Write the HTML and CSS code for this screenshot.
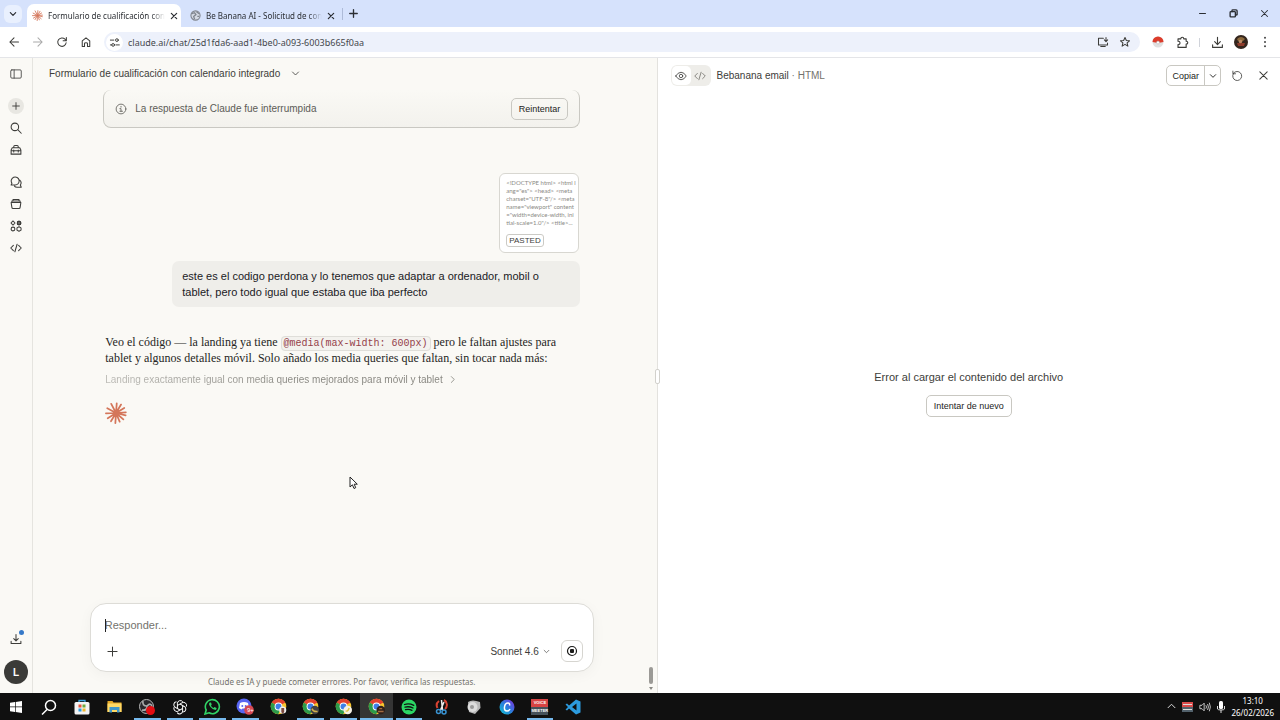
FILE: index.html
```html
<!DOCTYPE html>
<html lang="es">
<head>
    <meta charset="UTF-8">
    <meta name="viewport" content="width=device-width, initial-scale=1.0">
    <title>Formulario de cualificación con calendario integrado</title>
    <link rel="stylesheet" href="styles.css">
</head>
<body>
    <!-- Shared symbols -->
    <svg class="defs" width="0" height="0" aria-hidden="true">
        <symbol id="burst" viewBox="0 0 24 24">
            <path d="M12 12L12.800 1.500M12 12L17.500 2.800M12 12L21 6.500M12 12L22.800 11.200M12 12L22.500 14.500M12 12L20 19M12 12L16 21.500M12 12L11.300 23M12 12L6.500 21M12 12L3 17.800M12 12L1 12.300M12 12L2.500 6.800M12 12L6.800 2" fill="none" stroke="#d4765a" stroke-width="1.900" stroke-linecap="round"/>
        </symbol>
        <symbol id="chrome" viewBox="0 0 24 24">
            <circle cx="12" cy="12" r="11" fill="#f7c52d"/>
            <path d="M12 12L2.500 6.500A11 11 0 0 1 21.500 6.500Z" fill="#e2412f"/>
            <path d="M12 12L2.500 6.500A11 11 0 0 0 11.500 23L16 14Z" fill="#2c9b4b"/>
            <path d="M12 6.500H21.700L19 4 12 1 5 4 7 9Z" fill="#e2412f"/>
            <circle cx="12" cy="12" r="5.500" fill="#fff"/>
            <circle cx="12" cy="12" r="4.200" fill="#3f7fe8"/>
        </symbol>
        <symbol id="close" viewBox="0 0 12 12">
            <path d="M2 2L10 10M10 2L2 10"/>
        </symbol>
        <symbol id="down" viewBox="0 0 12 12">
            <path d="M2 4L6 8L10 4"/>
        </symbol>
        <symbol id="plus" viewBox="0 0 12 12">
            <path d="M6 1V11M1 6H11"/>
        </symbol>
        <symbol id="code" viewBox="0 0 16 16">
            <path d="M4.500 4.500L1 8L4.500 11.500M11.500 4.500L15 8L11.500 11.500M9.500 3L6.500 13"/>
        </symbol>
    </svg>

    <header class="browser">
        <div class="tab-strip">
            <button class="tab-search" aria-label="Buscar pestañas"><svg class="icon bold" width="8" height="8"><use href="#down"/></svg></button>
            <div class="tab active">
                <svg width="11" height="11"><use href="#burst"/></svg>
                <span class="tab-title">Formulario de cualificación con</span>
                <button aria-label="Cerrar"><svg class="icon bold" width="8" height="8"><use href="#close"/></svg></button>
            </div>
            <div class="tab">
                <svg width="11" height="11" viewBox="0 0 12 12"><circle cx="6" cy="6" r="5" fill="#d5dae4" stroke="#80868f" stroke-width="1.200"/><path d="M2 4L5 3L6.500 5L4 7L5 10M7 2L10 4M8 7L10 7" fill="none" stroke="#80868f" stroke-width="1.400"/></svg>
                <span class="tab-title">Be Banana AI - Solicitud de con</span>
                <button aria-label="Cerrar"><svg class="icon bold" width="8" height="8"><use href="#close"/></svg></button>
            </div>
            <button class="new-tab" aria-label="Nueva pestaña"><svg class="icon bold" width="9" height="9"><use href="#plus"/></svg></button>
            <div class="window-buttons">
                <button aria-label="Minimizar"><svg class="icon" width="9" height="9" viewBox="0 0 12 12"><path d="M2 6H10"/></svg></button>
                <button aria-label="Restaurar"><svg class="icon bold" width="9" height="9" viewBox="0 0 12 12"><rect x="1.500" y="3.500" width="7" height="7" rx="1"/><path d="M4 3.500V2Q4 1.200 5 1.200H9.500Q10.800 1.200 10.800 2.500V7.500Q10.800 8 9 8"/></svg></button>
                <button aria-label="Cerrar"><svg class="icon" width="9" height="9"><use href="#close"/></svg></button>
            </div>
        </div>
        <div class="toolbar">
            <div class="nav-buttons">
                <button aria-label="Atrás"><svg class="icon" width="12" height="12" viewBox="0 0 16 16"><path d="M14 8H2.500M8 2.500L2.500 8L8 13.500"/></svg></button>
                <button class="disabled" aria-label="Adelante"><svg class="icon" width="12" height="12" viewBox="0 0 16 16"><path d="M2 8H13.500M8 2.500L13.500 8L8 13.500"/></svg></button>
                <button aria-label="Recargar"><svg class="icon" width="12" height="12" viewBox="0 0 16 16"><path d="M13.500 9A5.600 5.600 0 1 1 12 4.300L13.500 6M13.800 2V6.200H9.500"/></svg></button>
                <button aria-label="Inicio"><svg class="icon" width="12" height="12" viewBox="0 0 16 16"><path d="M3 6.500L8 2.500L13 6.500V14H10V10Q10 9 8 9Q6 9 6 10V14H3Z"/></svg></button>
            </div>
            <div class="url-bar">
                <span class="site-info"><svg class="icon" width="11" height="11" viewBox="0 0 16 16"><path d="M2 4.500H7M2 11.500H4M10 11.500H15"/><circle cx="11.500" cy="4.500" r="2"/><circle cx="6" cy="11.500" r="2"/></svg></span>
                <input type="text" aria-label="Dirección" value="claude.ai/chat/25d1fda6-aad1-4be0-a093-6003b665f0aa">
                <button aria-label="Instalar"><svg class="icon" width="12" height="12" viewBox="0 0 16 16"><path d="M8.500 3H2V12H14V9.500M5 14H11M12 2V7M9.800 5.200L12 7.500L14.200 5.200"/></svg></button>
                <button aria-label="Favorito"><svg class="icon" width="12" height="12" viewBox="0 0 16 16"><path d="M8 2L9.800 6L14 6.400L10.800 9.200L11.800 13.500L8 11.200L4.200 13.500L5.200 9.200L2 6.400L6.200 6Z"/></svg></button>
            </div>
            <div class="extensions">
                <button aria-label="Extensión"><svg width="12" height="12" viewBox="0 0 12 12"><circle cx="6" cy="6" r="5.500" fill="#e0e0e0"/><path d="M.500 6A5.500 5.500 0 0 1 11.500 6L6 7Z" fill="#dc3c2b"/><circle cx="6" cy="6.500" r="1.500" fill="#fff" stroke="#aaa" stroke-width=".500"/></svg></button>
                <button aria-label="Extensiones"><svg class="icon" width="13" height="13" viewBox="0 0 16 16"><path d="M2.500 3.500H6Q6 1.500 7.800 1.500Q9.500 1.500 9.500 3.500H12.500V6.500Q14.500 6.500 14.500 8.300Q14.500 10 12.500 10V14H2.500V10.500Q5 10.500 5 8.500Q5 6.500 2.500 6.500Z"/></svg></button>
                <span class="divider"></span>
                <button aria-label="Descargas"><svg class="icon" width="13" height="13" viewBox="0 0 16 16"><path d="M8 1.500V10M4.500 7L8 10.500L11.500 7M2 11V14H14V11"/></svg></button>
                <button aria-label="Perfil"><svg width="14" height="14" viewBox="0 0 14 14"><circle cx="7" cy="7" r="7" fill="#33251d"/><path d="M3 4Q7 0 11 4L9 6H4Z" fill="#8c6a3d"/><path d="M3 8H11L10 11H4Z" fill="#8d3b2b"/><circle cx="6.500" cy="6.500" r="1.800" fill="#bc8a66"/></svg></button>
                <button aria-label="Menú"><svg width="12" height="12" viewBox="0 0 12 12" fill="#444"><circle cx="6" cy="1.800" r="1"/><circle cx="6" cy="6" r="1"/><circle cx="6" cy="10.200" r="1"/></svg></button>
            </div>
        </div>
    </header>

    <div class="app">
        <nav class="sidebar">
            <button aria-label="Barra lateral"><svg class="icon thin" width="12" height="12" viewBox="0 0 16 16"><rect x="1" y="2.500" width="14" height="11" rx="1.500"/><path d="M5.500 2.500V13.500"/></svg></button>
            <button class="new-chat" aria-label="Nuevo chat"><svg class="icon" width="8" height="8"><use href="#plus"/></svg></button>
            <button aria-label="Buscar"><svg class="icon" width="12" height="12" viewBox="0 0 16 16"><circle cx="6.500" cy="6.500" r="5"/><path d="M10.300 10.300L15 15"/></svg></button>
            <button aria-label="Personalizar"><svg class="icon" width="12" height="12" viewBox="0 0 16 16"><path d="M1.500 8L3 5H13L14.500 8V13.500H1.500ZM5 5V3.500Q5 2 6.500 2H9.500Q11 2 11 3.500V5M1.500 9H14.500M5 8V10.500M11 8V10.500"/></svg></button>
            <button class="group" aria-label="Chats"><svg class="icon" width="12" height="12" viewBox="0 0 16 16"><path d="M1.500 12L2.600 9.800A5.300 5.300 0 1 1 6.500 12ZM13 5.500A5 5 0 0 1 13.800 12L15 15H9.500Q7 15 6 13.500"/></svg></button>
            <button aria-label="Proyectos"><svg class="icon" width="12" height="12" viewBox="0 0 16 16"><path d="M1.500 6H14.500L13.500 12.500Q13.300 14 12 14H4Q2.700 14 2.500 12.500ZM2.500 6V4H13.500V6M4 4V2H12V4"/></svg></button>
            <button aria-label="Artefactos"><svg class="icon" width="12" height="12" viewBox="0 0 16 16"><path d="M4 1.300L6.700 4L4 6.700L1.300 4ZM10 2H14V6H10ZM12 1V7M9.500 4H15"/><circle cx="4" cy="12" r="2.500"/><path d="M12 9L14.700 10.500V13.500L12 15L9.300 13.500V10.500Z"/></svg></button>
            <button aria-label="Código"><svg class="icon" width="12" height="12"><use href="#code"/></svg></button>
            <button class="download" aria-label="Descargar"><svg class="icon" width="12" height="12" viewBox="0 0 16 16"><path d="M8 2V10M5 7.500L8 10.500L11 7.500M1.500 11V14H14.500V11"/></svg><span class="badge"></span></button>
            <button class="user" aria-label="Cuenta">L</button>
        </nav>

        <main class="chat">
            <button class="chat-title">Formulario de cualificación con calendario integrado <svg class="icon thin" width="9" height="9"><use href="#down"/></svg></button>

            <div class="messages">
                <div class="notice">
                    <svg class="icon thin" width="12" height="12" viewBox="0 0 16 16"><circle cx="8" cy="8" r="6.500"/><path d="M6.500 7.500H8V11M6.500 11H10M8 4.500V5.500"/></svg>
                    <span>La respuesta de Claude fue interrumpida</span>
                    <button class="btn">Reintentar</button>
                </div>

                <div class="attachment">
                    <p>&lt;!DOCTYPE html&gt; &lt;html l<br>ang="es"&gt; &lt;head&gt; &lt;meta<br>charset="UTF-8"/&gt; &lt;meta<br>name="viewport" content<br>="width=device-width, ini<br>tial-scale=1.0"/&gt; &lt;title&gt;...</p>
                    <span class="tag">PASTED</span>
                </div>

                <p class="user-message">este es el codigo perdona y lo tenemos que adaptar a ordenador, mobil o tablet, pero todo igual que estaba que iba perfecto</p>

                <p class="reply">Veo el código — la landing ya tiene <code>@media(max-width: 600px)</code> pero le faltan ajustes para tablet y algunos detalles móvil. Solo añado los media queries que faltan, sin tocar nada más:</p>

                <button class="step"><span>Landing exactamente igual con media queries mejorados para móvil y tablet</span> <svg class="icon" width="7" height="7" viewBox="0 0 12 12"><path d="M4 1L9 6L4 11"/></svg></button>

                <svg class="spinner" width="22" height="22"><use href="#burst"/></svg>
            </div>

            <div class="composer">
                <div class="field">
                    <span class="caret"></span>
                    <textarea rows="1" aria-label="Mensaje" placeholder="Responder..."></textarea>
                </div>
                <div class="composer-row">
                    <button aria-label="Adjuntar"><svg class="icon thin" width="11" height="11"><use href="#plus"/></svg></button>
                    <button class="model">Sonnet 4.6 <svg class="icon thin" width="7" height="7"><use href="#down"/></svg></button>
                    <button class="stop" aria-label="Detener"><svg width="12" height="12" viewBox="0 0 12 12"><circle cx="6" cy="6" r="4.500" fill="none" stroke="#1b1b1a" stroke-width="1.200"/><rect x="4" y="4" width="4" height="4" rx="1" fill="#1b1b1a"/></svg></button>
                </div>
            </div>
            <p class="disclaimer">Claude es IA y puede cometer errores. Por favor, verifica las respuestas.</p>
            <div class="scrollbar"></div>
            <svg class="scroll-down" width="4" height="3" viewBox="0 0 4 3"><path d="M0 0H4L2 3Z" fill="#8a8985"/></svg>
            <svg class="cursor" width="10" height="14" viewBox="0 0 10 14"><path d="M1 1V11L3.400 8.800L5 12.500L6.700 11.700L5.200 8.200H8.300Z" fill="#fff" stroke="#222" stroke-width="1"/></svg>
        </main>

        <section class="artifact">
            <span class="resize-handle"></span>
            <div class="artifact-bar">
                <div class="view-toggle">
                    <button class="selected" aria-label="Vista previa"><svg class="icon thin" width="12" height="12" viewBox="0 0 16 16"><path d="M1 8Q4 3 8 3T15 8Q12 13 8 13T1 8Z"/><circle cx="8" cy="8" r="2.300"/></svg></button>
                    <button aria-label="Código"><svg class="icon thin" width="12" height="12"><use href="#code"/></svg></button>
                </div>
                <h2>Bebanana email <span>· HTML</span></h2>
                <div class="copy">
                    <button>Copiar</button>
                    <button aria-label="Más opciones"><svg class="icon" width="8" height="8"><use href="#down"/></svg></button>
                </div>
                <button aria-label="Recargar"><svg class="icon thin" width="12" height="12" viewBox="0 0 16 16"><path d="M3 5A6 6 0 1 0 8 2Q5 2 3 4.500M2.500 1.500V5H6"/></svg></button>
                <button aria-label="Cerrar"><svg class="icon thin" width="11" height="11"><use href="#close"/></svg></button>
            </div>
            <div class="error">
                <p>Error al cargar el contenido del archivo</p>
                <button class="btn">Intentar de nuevo</button>
            </div>
        </section>
    </div>

    <footer class="taskbar">
        <div class="apps">
            <button aria-label="Inicio"><svg width="12" height="12" viewBox="0 0 12 12" fill="#fff"><path d="M0 1.700L5 1V5.600H0ZM5.700 .900L12 0V5.600H5.700ZM0 6.300H5V11L0 10.300ZM5.700 6.300H12V12L5.700 11.100Z"/></svg></button>
            <button aria-label="Buscar"><svg width="16" height="16" viewBox="0 0 16 16" fill="none" stroke="#fff" stroke-width="1.500"><circle cx="9.500" cy="6.500" r="5"/><path d="M6 10.500L1 15.500"/></svg></button>
            <button aria-label="Tienda"><svg width="16" height="16" viewBox="0 0 16 16"><path d="M5 4V1.500H11V4" fill="none" stroke="#3ba4df" stroke-width="1.300"/><rect x=".500" y="3" width="15" height="12.500" rx="1.500" fill="#f4f4f4"/><path d="M4.500 5.500H7.500V8.500H4.500Z" fill="#e8523b"/><path d="M8.500 5.500H11.500V8.500H8.500Z" fill="#6cab3d"/><path d="M4.500 9.500H7.500V12.500H4.500Z" fill="#2d9ce0"/><path d="M8.500 9.500H11.500V12.500H8.500Z" fill="#f0b72c"/></svg></button>
            <button aria-label="Explorador"><svg width="15" height="15" viewBox="0 0 15 15"><path d="M.500 2H5.500L6.500 3.500H14.500V13H.500Z" fill="#e5a929"/><path d="M.500 4.500H14.500V13H.500Z" fill="#ffd966"/><path d="M2.500 8H12.500V13.500H10V11H5V13.500H2.500Z" fill="#4097ca"/></svg></button>
            <button class="open" aria-label="OBS"><svg width="18" height="18" viewBox="0 0 18 18"><circle cx="8.500" cy="8.500" r="7" fill="#29272b" stroke="#b8b8b8"/><path d="M9 8Q4 8 5 3M9 8Q13 4 14 9M9 8Q9 13 4 12" fill="none" stroke="#aaa" stroke-width="1.700"/><circle cx="12.500" cy="12.500" r="4.500" fill="#e40d12"/></svg></button>
            <button class="open" aria-label="ChatGPT"><svg width="16" height="16" viewBox="0 0 16 16" fill="none" stroke="#fff"><path id="petal" d="M5.400 9.500V4.200A3 3 0 0 1 10.800 2.800M5.400 6.500L10 3.800A3 3 0 0 1 14.300 7.600"/><use href="#petal" transform="rotate(120 8 8)"/><use href="#petal" transform="rotate(240 8 8)"/></svg></button>
            <button class="open" aria-label="WhatsApp"><svg width="17" height="17" viewBox="0 0 17 17"><path d="M1 16L2.200 12A7 7 0 1 1 5 14.800Z" fill="#111" stroke="#31d366" stroke-width="1.600"/><path d="M5.800 4.500Q4 6 6.500 9T11.500 12Q13 11 12.500 10L10.500 9L9.500 10Q7.500 9 7 7.500L7.700 6.500L7 4.500Z" fill="#31d366"/></svg></button>
            <button class="open" aria-label="Discord"><svg width="18" height="18" viewBox="0 0 18 18"><circle cx="8" cy="8" r="7.500" fill="#5865f2"/><path d="M4 5Q8 3 12 5L13 10L10.500 11.500L9.500 10.500H6.500L5.500 11.500L3 10Z" fill="#fff"/><circle cx="6.300" cy="8" r="1" fill="#5865f2"/><circle cx="9.700" cy="8" r="1" fill="#5865f2"/><circle cx="13" cy="12" r="4.800" fill="#d64852"/></svg><span class="count">9+</span></button>
            <button aria-label="Chrome"><svg width="17" height="17" viewBox="0 0 24 24"><use href="#chrome"/><circle cx="18" cy="17" r="5" fill="#eee"/><path d="M16 14H20V20L18 22L16 20Z" fill="#7b493e"/></svg></button>
            <button class="open" aria-label="Chrome"><svg width="17" height="17" viewBox="0 0 24 24"><use href="#chrome"/><circle cx="18" cy="17" r="6" fill="#414044"/><path d="M14 15Q16 20 22 19" fill="none" stroke="#d2b14b" stroke-width="2"/></svg></button>
            <button class="open" aria-label="Chrome"><svg width="17" height="17" viewBox="0 0 24 24"><use href="#chrome"/><circle cx="18" cy="17" r="6" fill="#f4f0e4"/><path d="M15 18Q18 20 20 14" fill="none" stroke="#dec33f" stroke-width="2"/></svg></button>
            <button class="open current" aria-label="Chrome"><svg width="17" height="17" viewBox="0 0 24 24"><use href="#chrome"/><circle cx="18" cy="17" r="6" fill="#30211b"/><path d="M14 19H22M16 15H20" stroke="#a36c43" stroke-width="2"/></svg></button>
            <button class="open" aria-label="Spotify"><svg width="16" height="16" viewBox="0 0 16 16"><circle cx="8" cy="8" r="7.500" fill="#2bd765"/><path d="M3.500 5.500Q8 4 12.800 6.300M4 8.200Q8 7 12 9M4.500 10.700Q8 9.800 11 11.300" fill="none" stroke="#111" stroke-width="1.300" stroke-linecap="round"/></svg></button>
            <button aria-label="Recortes"><svg width="16" height="16" viewBox="0 0 16 16" fill="none"><path d="M5 2A5.500 5.500 0 0 0 3.500 9M10 1A5.500 5.500 0 0 1 11 10" stroke="#d84332" stroke-width="2"/><path d="M7.500 1L8.500 11M10 3L6.500 11" stroke="#eee" stroke-width="1.500"/><circle cx="4.500" cy="12.500" r="2" stroke="#3993d2" stroke-width="1.500"/><circle cx="10" cy="13" r="2" stroke="#3993d2" stroke-width="1.500"/></svg></button>
            <button aria-label="Audio"><svg width="16" height="16" viewBox="0 0 16 16"><path d="M2 3Q6 0 14 3L14.500 9L9 15L3 13Z" fill="#b8b8b8"/><circle cx="6.500" cy="8" r="5" fill="#ddd"/><circle cx="6" cy="8" r="2" fill="#999"/></svg></button>
            <button aria-label="Canva"><svg width="16" height="16" viewBox="0 0 16 16"><defs><linearGradient id="canva" x1="0" y1="1" x2="1" y2="0"><stop stop-color="#14c6d1"/><stop offset=".450" stop-color="#2684dc"/><stop offset="1" stop-color="#822be0"/></linearGradient></defs><circle cx="8" cy="8" r="7.500" fill="url(#canva)"/><path d="M10.500 6.500Q11 4 9 4Q6 4 5.500 8T8 12Q10 12 11 10" fill="none" stroke="#fff" stroke-width="1.500"/></svg></button>
            <button class="open" aria-label="Voicemeeter"><span class="voice"><b>VOICE</b><b>MEETER</b></span></button>
            <button aria-label="Visual Studio Code"><svg width="16" height="16" viewBox="0 0 16 16"><path d="M11 .500L15.500 2.500V13.500L11 15.500L4 9.500L2 11.500L.500 10.500L3 8L.500 5.500L2 4.500L4 6.500ZM11.500 4.500L7 8L11.500 11.500Z" fill="#2c9bdf" fill-rule="evenodd"/></svg></button>
        </div>
        <div class="tray">
            <svg width="9" height="9" viewBox="0 0 12 12" fill="none" stroke="#ddd" stroke-width="1.300"><path d="M1 8L6 3L11 8"/></svg>
            <svg width="11" height="10" viewBox="0 0 11 10"><path d="M0 0H11V5H0Z" fill="#d84b4b"/><path d="M0 5H11V10H0Z" fill="#52616b"/><path d="M1 2.500H10M1 7.500H10" stroke="#ddd"/></svg>
            <svg width="12" height="12" viewBox="0 0 14 14" fill="none" stroke="#ddd"><path d="M1 5H3.500L6 2.500V11.500L3.500 9H1ZM8 5Q9.500 7 8 9M10 3.500Q12 7 10 10.500M12 2Q14.500 7 12 12"/></svg>
            <svg width="8" height="12" viewBox="0 0 8 12"><rect x="2" y="0" width="4" height="8" rx="1.500" fill="#fff"/><path d="M.500 5V8Q1 9 4 9T7.500 8V5M4 9V12" fill="none" stroke="#ddd"/></svg>
            <time datetime="2026-02-26T13:10">13:10<br>26/02/2026</time>
        </div>
    </footer>
</body>
</html>
```

FILE: styles.css
```css
* {
    box-sizing: border-box;
}

body {
    margin: 0;
    height: 100vh;
    display: flex;
    flex-direction: column;
    overflow: hidden;
    font-family: "Liberation Sans", sans-serif;
    font-size: 10px;
    color: #3d3d3a;
}

p, h2 {
    margin: 0;
}

button {
    display: flex;
    align-items: center;
    justify-content: center;
    padding: 0;
    border: none;
    background: none;
    color: inherit;
    font: inherit;
    cursor: pointer;
}

svg {
    flex: none;
}

.defs {
    position: absolute;
}

.icon {
    fill: none;
    stroke: currentColor;
    stroke-width: 1.4;
    stroke-linecap: round;
    stroke-linejoin: round;
}

.icon.bold {
    stroke-width: 1.8;
}

.icon.thin {
    stroke-width: 1.1;
}

/* Browser */
.browser {
    font-family: "Noto Sans", sans-serif;
}

.tab-strip {
    display: flex;
    align-items: center;
    height: 27px;
    padding-left: 4px;
    background: #d6e2fc;
    font-size: 8px;
    color: #2b2e33;
}

.tab-search {
    width: 18px;
    height: 18px;
    margin-right: 5px;
    border-radius: 6px;
    background: #e9f0fe;
}

.tab {
    display: flex;
    align-items: center;
    gap: 5px;
    width: 160px;
    height: 23px;
    padding: 0 8px 0 9px;
    align-self: flex-end;
}

.tab.active {
    width: 154px;
    padding: 0 6px 0 5px;
    border-radius: 7px 7px 0 0;
    background: #fff;
}

.tab-title {
    flex: 1;
    white-space: nowrap;
    mask-image: linear-gradient(to right, #000 88%, transparent);
}

.tab button {
    width: 8px;
    height: 12px;
}

.new-tab {
    width: 22px;
    height: 12px;
    margin-left: 1px;
    border-left: 1px solid #aebbd8;
}

.window-buttons {
    display: flex;
    margin-left: auto;
}

.window-buttons button {
    width: 31px;
    height: 27px;
}

.toolbar {
    display: flex;
    align-items: center;
    gap: 6px;
    height: 31px;
    padding: 0 3px 0 2px;
    border-bottom: 1px solid #e4e5e8;
    background: #fff;
}

.nav-buttons,
.extensions {
    display: flex;
    align-items: center;
}

.nav-buttons button,
.extensions button {
    width: 24px;
    height: 20px;
}

.disabled {
    color: #aaa;
}

.url-bar {
    display: flex;
    flex: 1;
    align-items: center;
    height: 20px;
    padding: 0 4px 0 2px;
    border-radius: 10px;
    background: #edf1fb;
}

.site-info {
    display: grid;
    place-items: center;
    width: 17px;
    height: 17px;
    border-radius: 9px;
    background: #fff;
}

.url-bar input {
    flex: 1;
    padding: 0 5px;
    border: none;
    background: none;
    color: #44474c;
    font: inherit;
    font-size: 9px;
}

.url-bar button {
    width: 22px;
}

.divider {
    width: 1px;
    height: 9px;
    margin: 0 5px;
    background: #d0d3da;
}

/* App */
.app {
    display: grid;
    grid-template-columns: 33px 1fr 1fr;
    flex: 1;
    min-height: 0;
    background: #faf9f5;
}

.sidebar {
    display: flex;
    flex-direction: column;
    align-items: center;
    gap: 6px;
    padding: 8px 0 9px;
    border-right: 1px solid #e5e4df;
}

.sidebar button {
    width: 16px;
    height: 16px;
}

.sidebar .new-chat {
    margin-top: 10px;
    border-radius: 50%;
    background: #e8e7e2;
}

.sidebar .group {
    margin-top: 10px;
}

.sidebar .download {
    position: relative;
    margin-top: auto;
    margin-bottom: 7px;
}

.badge {
    position: absolute;
    top: -1px;
    right: 0;
    width: 5px;
    height: 5px;
    border-radius: 50%;
    background: #3679c8;
}

.sidebar .user {
    width: 24px;
    height: 24px;
    border-radius: 50%;
    background: #3b3b38;
    color: #fff;
    font-weight: 700;
}

.chat {
    position: relative;
    display: flex;
    flex-direction: column;
    align-items: center;
    min-width: 0;
    padding: 7px 6px 4px 0;
}

.chat-title {
    align-self: flex-start;
    gap: 11px;
    height: 16px;
    margin-left: 16px;
}

.messages {
    flex: 1;
    display: flex;
    flex-direction: column;
    align-items: flex-start;
    width: 100%;
    max-width: 477px;
    margin-top: 9px;
}

.notice {
    display: flex;
    align-items: center;
    gap: 8px;
    width: 100%;
    height: 38px;
    padding: 0 11px;
    border: 1px solid #c9c8c2;
    border-top: none;
    border-radius: 8px;
    background: linear-gradient(#faf9f5, #f3f2ed);
    color: #5d5c57;
}

.notice .btn {
    margin-left: auto;
}

.btn {
    height: 22px;
    padding: 0 7px;
    border: 1px solid #c9c8c2;
    border-radius: 5px;
    color: #242422;
    font-size: 9px;
}

.attachment {
    align-self: flex-end;
    width: 80px;
    height: 80px;
    margin: 45px 1px 8px 0;
    padding: 5px 6px;
    border: 1px solid #d8d7d1;
    border-radius: 6px;
    background: #fff;
}

.attachment p {
    margin-bottom: 7px;
    color: #8b8a85;
    font-family: Lato, sans-serif;
    font-size: 6px;
    line-height: 8px;
    white-space: nowrap;
}

.tag {
    display: block;
    width: fit-content;
    padding: 0 2px;
    border: 1px solid #cbcac5;
    border-radius: 3px;
    font-size: 8px;
    line-height: 11px;
}

.user-message {
    align-self: flex-end;
    max-width: 408px;
    padding: 7px 10px;
    border-radius: 7px;
    background: #efeeea;
    color: #20201e;
    font-size: 11px;
    line-height: 16px;
}

.reply {
    margin: 27px 0 0 2px;
    color: #262624;
    font-family: "Liberation Serif", serif;
    font-size: 12px;
    line-height: 16px;
}

code {
    padding: 1px 2px;
    border: 1px solid #dfded9;
    border-radius: 4px;
    background: #f3f2ee;
    color: #953f4a;
    font-family: "Liberation Mono", monospace;
    font-size: 10px;
    line-height: 1;
}

.step {
    gap: 6px;
    height: 16px;
    margin: 5px 0 0 2px;
    color: #85847e;
}

.step span {
    background: linear-gradient(to right, #bbbab5, #85847e 60%);
    background-clip: text;
    color: transparent;
}

.spinner {
    margin: 15px 0 0 2px;
}

.composer {
    width: 100%;
    max-width: 504px;
    padding: 13px 10px 9px 14px;
    border: 1px solid #dddcd7;
    border-radius: 16px;
    background: #fff;
    box-shadow: 0 3px 14px rgba(0, 0, 0, 0.04);
}

.field {
    position: relative;
}

.caret {
    position: absolute;
    top: 2px;
    left: 0;
    width: 1px;
    height: 13px;
    background: #222;
}

textarea {
    display: block;
    width: 100%;
    height: 18px;
    padding: 0;
    border: none;
    outline: none;
    resize: none;
    overflow: hidden;
    background: none;
    font: inherit;
    font-size: 11px;
    line-height: 16px;
}

textarea::placeholder {
    color: #73726c;
}

.composer-row {
    display: flex;
    align-items: center;
    margin-top: 5px;
}

.composer-row button:first-child {
    width: 16px;
    height: 16px;
}

.model {
    gap: 4px;
    margin-left: auto;
}

.stop {
    width: 22px;
    height: 22px;
    margin-left: 11px;
    border: 1px solid #d6d5d0;
    border-radius: 6px;
}

.disclaimer {
    margin-top: 3px;
    color: #73726c;
    font-family: "Noto Sans", sans-serif;
    font-size: 8px;
    line-height: 14px;
}

.scrollbar {
    position: absolute;
    right: 4px;
    bottom: 9px;
    width: 4px;
    height: 17px;
    border-radius: 2px;
    background: #9b9a96;
}

.scroll-down {
    position: absolute;
    right: 4px;
    bottom: 3px;
}

.cursor {
    position: absolute;
    top: 418px;
    left: 316px;
}

/* Artifact panel */
.artifact {
    position: relative;
    display: flex;
    flex-direction: column;
    border-left: 1px solid #e3e2de;
    background: #fff;
}

.resize-handle {
    position: absolute;
    top: 311px;
    left: -3px;
    width: 5px;
    height: 15px;
    border: 1px solid #d2d1cc;
    border-radius: 2px;
    background: #fff;
}

.artifact-bar {
    display: flex;
    align-items: center;
    gap: 6px;
    height: 35px;
    padding: 0 7px 0 13px;
}

.artifact-bar > button {
    width: 20px;
    height: 20px;
}

.view-toggle {
    display: flex;
    padding: 1px;
    border-radius: 6px;
    background: #eeede9;
}

.view-toggle button {
    width: 19px;
    height: 19px;
    border-radius: 5px;
    color: #73726c;
}

.view-toggle .selected {
    background: #fff;
    color: #3d3d3a;
}

h2 {
    font-size: 10px;
    font-weight: 400;
}

h2 span {
    color: #73726c;
}

.copy {
    display: flex;
    height: 21px;
    margin-left: auto;
    border: 1px solid #c9c8c2;
    border-radius: 5px;
    color: #242422;
    font-size: 9px;
}

.copy button {
    padding: 0 5px;
}

.copy button + button {
    width: 16px;
    padding: 0;
    border-left: 1px solid #c9c8c2;
}

.error {
    flex: 1;
    display: flex;
    flex-direction: column;
    align-items: center;
    justify-content: center;
    gap: 12px;
    padding-top: 2px;
    font-size: 11px;
}

/* Taskbar */
.taskbar {
    display: flex;
    align-items: center;
    height: 27px;
    background: #101010;
    color: #fff;
}

.apps {
    display: flex;
    flex: 0 1 589px;
    height: 100%;
}

.apps button {
    position: relative;
    flex: 1;
}

.apps .open::after {
    content: "";
    position: absolute;
    right: 3px;
    bottom: 0;
    left: 3px;
    height: 2px;
    background: #76b9ed;
}

.apps .current {
    background: #353535;
}

.apps .current::after {
    right: 0;
    left: 0;
}

.count {
    position: absolute;
    right: 8px;
    bottom: 6px;
    font-size: 6px;
    line-height: 8px;
}

.voice {
    display: grid;
    width: 17px;
    background: #46515a;
    font-size: 4px;
    line-height: 8px;
}

.voice b:first-child {
    background: #d64343;
}

.tray {
    display: flex;
    align-items: center;
    gap: 6px;
    margin-left: auto;
    padding-right: 6px;
}

.tray time {
    font-family: "Noto Sans", sans-serif;
    font-size: 8px;
    line-height: 12px;
    text-align: center;
}
```
